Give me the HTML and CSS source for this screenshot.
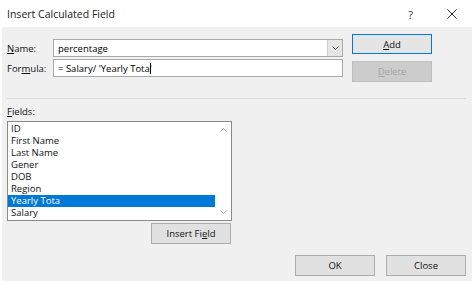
FILE: index.html
```html
<!DOCTYPE html>
<html>
<head>
<meta charset="utf-8">
<link rel="stylesheet" href="styles.css">
</head>
<body>
<div class="dialog">
  <div class="titlebar">
    <span class="title">Insert Calculated Field</span>
    <span class="help">?</span>
    <svg class="close-x" width="10" height="10" viewBox="0 0 10 10"><path d="M0.5 0.5 L9.5 9.5 M9.5 0.5 L0.5 9.5" stroke="#222" stroke-width="1" fill="none"/></svg>
  </div>
  <div class="body">
    <div class="top">
      <div class="form">
        <div class="row">
          <span class="label"><u>N</u>ame:</span>
          <div class="input combo">
            <span class="value">percentage</span>
            <span class="drop"><svg width="7" height="4" viewBox="0 0 7 4"><path d="M0.5 0.5 L3.5 3.5 L6.5 0.5" stroke="#555" stroke-width="1" fill="none"/></svg></span>
          </div>
        </div>
        <div class="row">
          <span class="label">For<u>m</u>ula:</span>
          <div class="input">
            <span class="value">= Salary/ 'Yearly Tota'<span class="caret"></span></span>
          </div>
        </div>
      </div>
      <div class="side">
        <div class="btn btn-add"><u>A</u>dd</div>
        <div class="btn btn-disabled"><u>D</u>elete</div>
      </div>
    </div>
    <div class="sep"></div>
    <div class="fields-label"><u>F</u>ields:</div>
    <div class="fields-col">
      <div class="listbox">
        <ul class="items">
          <li>ID</li>
          <li>First Name</li>
          <li>Last Name</li>
          <li>Gener</li>
          <li>DOB</li>
          <li>Region</li>
          <li class="sel">Yearly Tota</li>
          <li>Salary</li>
        </ul>
        <div class="scroll">
          <svg width="7" height="4" viewBox="0 0 7 4"><path d="M0.5 3.5 L3.5 0.5 L6.5 3.5" stroke="#b5b5b5" stroke-width="1" fill="none"/></svg>
          <svg width="7" height="4" viewBox="0 0 7 4"><path d="M0.5 0.5 L3.5 3.5 L6.5 0.5" stroke="#b5b5b5" stroke-width="1" fill="none"/></svg>
        </div>
      </div>
      <div class="btn btn-insert">Insert Fi<u>e</u>ld</div>
    </div>
    <div class="footer">
      <div class="btn">OK</div>
      <div class="btn">Close</div>
    </div>
  </div>
</div>
</body>
</html>
```
FILE: styles.css
```css
* { box-sizing: border-box; }
html, body { margin: 0; padding: 0; background: #ffffff; }
body {
  font-family: "Open Sans", "Noto Sans", sans-serif;
  font-size: 9.5px;
  color: #000;
  width: 474px;
  height: 284px;
  overflow: hidden;
}
u { text-decoration: underline; text-underline-offset: 1px; }
.dialog { width: 474px; height: 284px; }
.titlebar {
  height: 27px;
  display: flex;
  align-items: center;
  padding-left: 7px;
  background: #fff;
}
.title { font-size: 10.5px; color: #1a1a1a; flex: 1; padding-top: 1px; }
.help { font-size: 11px; color: #333; margin-right: 34px; padding-top: 1px; }
.close-x { margin-right: 17px; }
.body {
  margin: 0 2px;
  height: 254px;
  background: #f0f0f0;
  padding: 7px 6px 5px 5px;
  display: flex;
  flex-direction: column;
}
.top { display: flex; height: 48px; }
.form {
  display: flex;
  flex-direction: column;
  gap: 2px;
  padding-top: 5px;
}
.row { display: flex; align-items: center; height: 18px; }
.label { width: 46px; padding-left: 0; color: #111; }
.input {
  width: 290px;
  height: 18px;
  background: #fff;
  border: 1px solid #a9a9a9;
  display: flex;
  align-items: center;
  padding-left: 4px;
}
.value { flex: 1; white-space: nowrap; position: relative; }
.caret {
  display: inline-block;
  width: 1px;
  height: 11px;
  background: #000;
  vertical-align: middle;
  margin-left: -2px;
}
.drop {
  width: 15px;
  height: 16px;
  background: #e6e6e6;
  border-left: 1px solid #cfcfcf;
  display: flex;
  align-items: center;
  justify-content: center;
}
.side {
  margin-left: 9px;
  display: flex;
  flex-direction: column;
  gap: 7px;
}
.btn {
  width: 80px;
  height: 21px;
  background: #e1e1e1;
  border: 1px solid #adadad;
  display: flex;
  align-items: center;
  justify-content: center;
  color: #111;
}
.btn-add {
  height: 20px;
  border-color: #0078d7;
  background: #e5e5e5;
}
.btn-disabled {
  background: #cccccc;
  border-color: #bfbfbf;
  color: #a6a6a6;
}
.sep {
  margin-top: 16px;
  margin-left: 0;
  margin-right: 0;
  height: 1px;
  background: #d9d9d9;
}
.fields-label {
  margin-top: 6px;
  height: 14px;
  line-height: 14px;
  color: #111;
}
.fields-col {
  margin-top: 2px;
  width: 225px;
  display: flex;
  flex-direction: column;
  align-items: flex-end;
}
.listbox {
  width: 225px;
  height: 100px;
  background: #fff;
  border: 1px solid #8a8a8a;
  display: flex;
  padding: 1px 0 1px 0;
}
.items {
  list-style: none;
  margin: 0;
  padding: 0;
  flex: 1;
}
.items li {
  height: 12px;
  line-height: 12px;
  padding-left: 3px;
  color: #111;
}
.items li.sel { background: #0078d7; color: #fff; }
.scroll {
  width: 16px;
  display: flex;
  flex-direction: column;
  justify-content: space-between;
  align-items: center;
  padding: 5px 0 5px 0;
}
.btn-insert { margin-top: 2px; margin-right: 1px; }
.footer {
  margin-top: 11px;
  display: flex;
  justify-content: flex-end;
  gap: 11px;
}
```
